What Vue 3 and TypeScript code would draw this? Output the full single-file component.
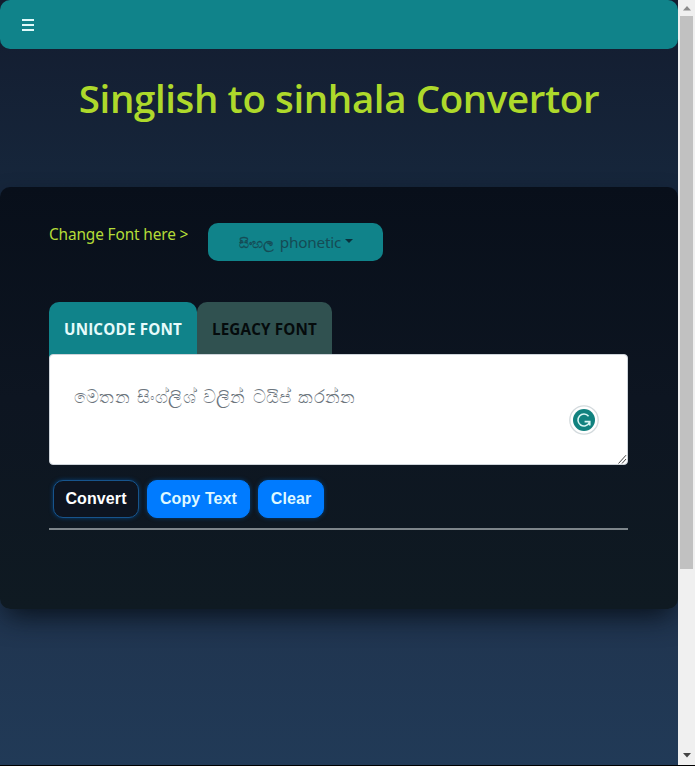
<script setup lang="ts">
import { ref } from 'vue'

const text = ref('')
const tab = ref<'unicode' | 'legacy'>('unicode')
const placeholder = 'මෙතන සිංග්ලිශ් වලින් ටයිප් කරන්න'

function clearText(): void {
  text.value = ''
}
</script>

<template>
  <div class="window">
    <main class="page">
      <nav class="navbar">
        <button class="menu" aria-label="Menu">
          <svg width="12" height="13" viewBox="0 0 12 13" shape-rendering="crispEdges">
            <path d="M0 0h12v2H0zM0 5h12v2H0zM0 10h12v2H0z" fill="#dffafa" />
          </svg>
        </button>
      </nav>
      <h1 class="title"><span>Singlish to sinhala Convertor</span></h1>
      <section class="card">
        <div class="font-row">
          <span class="font-label">Change Font here &gt;</span>
          <button class="dropdown"><span class="si">සිංහල</span><span class="ph">phonetic</span><i class="caret"></i></button>
        </div>
        <div class="tabs">
          <button class="tab unicode" :class="{ active: tab === 'unicode' }" @click="tab = 'unicode'"><span>UNICODE FONT</span></button>
          <button class="tab legacy" :class="{ active: tab === 'legacy' }" @click="tab = 'legacy'"><span>LEGACY FONT</span></button>
        </div>
        <div class="editor">
          <textarea v-model="text" class="input" :placeholder="placeholder"></textarea>
          <svg class="checker" width="30" height="30" viewBox="0 0 30 30">
            <circle cx="15" cy="15" r="14.2" fill="#fff" stroke="#d3dadd" stroke-width="1.3" />
            <circle cx="15" cy="15" r="11" fill="#11827f" />
            <path d="M19.6 11.2A6 6 0 1 0 20.4 17.6M15.6 16.6H20.8V20.6" fill="none" stroke="#d9f6f4" stroke-width="1.6" />
          </svg>
          <svg class="grip" width="9" height="10" viewBox="0 0 9 10">
            <path d="M.5 9.5L8 1.2M4 9.5L8 5" stroke="#444" fill="none" />
          </svg>
        </div>
        <div class="actions">
          <button class="btn outline">Convert</button>
          <button class="btn copy">Copy Text</button>
          <button class="btn clear" @click="clearText">Clear</button>
        </div>
        <hr class="rule" />
      </section>
    </main>
    <aside class="scrollbar">
      <svg class="arrow" width="8" height="5" viewBox="0 0 8 5"><path d="M4 0l4 4.5H0z" fill="#8b8b8b" /></svg>
      <div class="thumb"></div>
      <svg class="arrow down" width="8" height="5" viewBox="0 0 8 5"><path d="M4 4.5L0 0h8z" fill="#444" /></svg>
    </aside>
  </div>
</template>

<style>
body {
  background: #000;
  overflow: hidden;
}
</style>

<style scoped>
* {
  box-sizing: border-box;
}
.window {
  display: flex;
  width: 695px;
  height: 766px;
  border-bottom: 1px solid #000;
  font-family: 'Noto Sans', 'Open Sans', sans-serif;
}
button {
  margin: 0;
  padding: 0;
  border: 0;
  font: inherit;
  white-space: nowrap;
}
.page {
  width: 678px;
  overflow: hidden;
  background: linear-gradient(#131c2f, #16263b 24%, #203550 82%, #213a57);
}
.navbar {
  display: flex;
  align-items: center;
  height: 49px;
  padding-left: 22px;
  border-radius: 10px;
  background: #10838a;
}
.menu {
  display: flex;
  padding-top: 2px;
  background: none;
}
.title {
  display: flex;
  justify-content: center;
  height: 138px;
  margin: 0;
  padding-top: 24px;
  color: #aed92b;
  font-family: 'Open Sans', 'Noto Sans', sans-serif;
  font-size: 38.5px;
  font-weight: 600;
  line-height: 50px;
  white-space: nowrap;
  letter-spacing: -0.4px;
}
.card {
  height: 422px;
  padding: 36px 50px 0 49px;
  border-radius: 10px;
  background: linear-gradient(#080f1a, #0d1521 50%, #0f1a22);
  box-shadow: 0 12px 28px -6px #08101a;
}
.font-row {
  display: flex;
  height: 79px;
}
.font-label {
  width: 159px;
  color: #b4dc38;
  font-size: 15.4px;
  line-height: 24px;
  letter-spacing: -0.13px;
  white-space: nowrap;
}
.dropdown {
  display: flex;
  align-items: center;
  justify-content: center;
  width: 175px;
  height: 38px;
  border-radius: 10px;
  background: #10838a;
  color: #154b55;
  font-size: 15.3px;
  letter-spacing: -0.2px;
}
.si {
  width: 37px;
  margin-right: 5px;
  font-size: 13.8px;
  -webkit-text-stroke: 0.3px #154b55;
}
.caret {
  margin: -3px 0 0 4px;
  border: 4px solid transparent;
  border-top-color: #09313c;
  border-bottom: 0;
}
.tabs {
  display: flex;
  height: 52px;
}
.tab {
  width: 148px;
  height: 58px;
  padding-bottom: 4px;
  border-radius: 10px 10px 0 0;
  background: #305150;
  color: #050b0c;
  font-family: 'Open Sans', 'Noto Sans', sans-serif;
  font-size: 15.2px;
  font-weight: 700;
  letter-spacing: 0.18px;
}
.tab.legacy {
  width: 135px;
}
.tab.active {
  background: #10838a;
  color: #e6fbfb;
}
.editor {
  position: relative;
  height: 111px;
}
.input {
  display: block;
  width: 579px;
  height: 111px;
  padding: 29px 24px;
  border: 1px solid #ced4da;
  border-radius: 4px;
  background: #fff;
  color: #333;
  font-family: 'Noto Sans', 'Open Sans', sans-serif;
  font-size: 17.5px;
  line-height: 24px;
  letter-spacing: 0.3px;
  word-spacing: 2px;
  resize: none;
  outline: 0;
}
.input::placeholder {
  color: #6c757d;
}
.checker {
  position: absolute;
  top: 51px;
  right: 29px;
}
.grip {
  position: absolute;
  right: 1px;
  bottom: 1px;
}
.actions {
  display: flex;
  gap: 8px;
  height: 63px;
  padding: 15px 0 0 4px;
}
.btn {
  height: 38px;
  border: 1px solid #007bff;
  border-radius: 10px;
  background: #007bff;
  box-shadow: 0 0 4px #064078;
  color: #dff8ff;
  font: 700 16px 'Liberation Sans', Arial, sans-serif;
  letter-spacing: 0.1px;
}
.outline {
  width: 86px;
  border-color: #17548c;
  background: #0d1420;
  color: #fff;
}
.copy {
  width: 103px;
}
.clear {
  width: 66px;
}
.rule {
  height: 2px;
  margin: 0;
  border: 0;
  background: #7d858a;
}
.scrollbar {
  display: flex;
  flex-direction: column;
  align-items: center;
  width: 17px;
  padding: 6px 0 7px;
  background: #f0f0f0;
}
.arrow {
  flex: none;
}
.thumb {
  width: 13px;
  height: 553px;
  margin-top: 5px;
  background: #c1c1c1;
}
.down {
  margin-top: auto;
}
</style>
